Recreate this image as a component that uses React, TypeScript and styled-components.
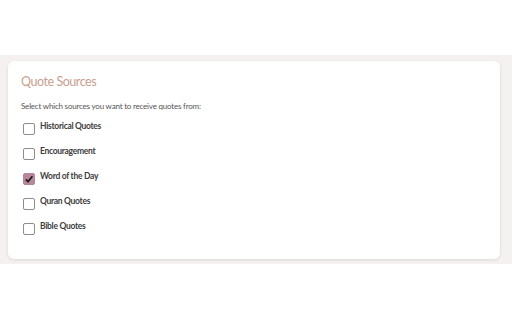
import React, {useState} from 'react';
import styled, {createGlobalStyle} from 'styled-components';

const GlobalStyle = createGlobalStyle`
  html, body {
    margin: 0;
    padding: 0;
    background: #ffffff;
    font-family: Lato, 'Open Sans', Arial, sans-serif;
  }
`;

const TopSpace = styled.div`
  height: 55px;
`;

const Band = styled.section`
  background: #f5f1f0;
  padding: 6px 12px 5px 8px;
`;

const Card = styled.div`
  background: #ffffff;
  border-radius: 6px;
  box-shadow: 0 1px 3px rgba(120, 100, 100, 0.18);
  padding: 13px 13px 16px;
  min-height: 198px;
  box-sizing: border-box;
`;

const Title = styled.h2`
  margin: 0;
  font-size: 12.5px;
  line-height: 16px;
  font-weight: 400;
  letter-spacing: -0.45px;
  color: #c9a08f;
`;

const Hint = styled.p`
  margin: 10px 0 9px;
  font-size: 8px;
  line-height: 12px;
  letter-spacing: -0.2px;
  color: #555;
`;

const List = styled.div`
  display: flex;
  flex-direction: column;
  gap: 11px;
  padding-left: 2px;
`;

const Row = styled.label`
  display: flex;
  align-items: flex-start;
  gap: 5px;
  cursor: pointer;
`;

const Box = styled.span<{$checked: boolean}>`
  flex: none;
  width: 12px;
  height: 12px;
  box-sizing: border-box;
  margin-top: 2px;
  border-radius: 2px;
  border: 1px solid ${p => (p.$checked ? '#b38497' : '#8d8d8d')};
  background: ${p => (p.$checked ? '#b8879b' : '#ffffff')};
  display: flex;
  align-items: center;
  justify-content: center;
`;

const Name = styled.span`
  font-size: 8.5px;
  line-height: 11px;
  font-weight: 700;
  letter-spacing: -0.3px;
  color: #3d3d3d;
`;

const sources = ['Historical Quotes', 'Encouragement', 'Word of the Day', 'Quran Quotes', 'Bible Quotes'];

export default function App() {
  const [picked, setPicked] = useState<string[]>(['Word of the Day']);

  const toggle = (name: string) => {
    setPicked(prev => (prev.includes(name) ? prev.filter(n => n !== name) : [...prev, name]));
  };

  return (
    <>
      <GlobalStyle />
      <TopSpace />
      <Band>
        <Card>
          <Title>Quote Sources</Title>
          <Hint>Select which sources you want to receive quotes from:</Hint>
          <List>
            {sources.map(name => {
              const on = picked.includes(name);
              return (
                <Row key={name} onClick={() => toggle(name)}>
                  <Box $checked={on}>
                    {on && (
                      <svg width="10" height="10" viewBox="0 0 10 10">
                        <path d="M1.8 5.3 L4 7.6 L8.4 2.2" fill="none" stroke="#1e1e1e" strokeWidth="1.7" />
                      </svg>
                    )}
                  </Box>
                  <Name>{name}</Name>
                </Row>
              );
            })}
          </List>
        </Card>
      </Band>
    </>
  );
}
